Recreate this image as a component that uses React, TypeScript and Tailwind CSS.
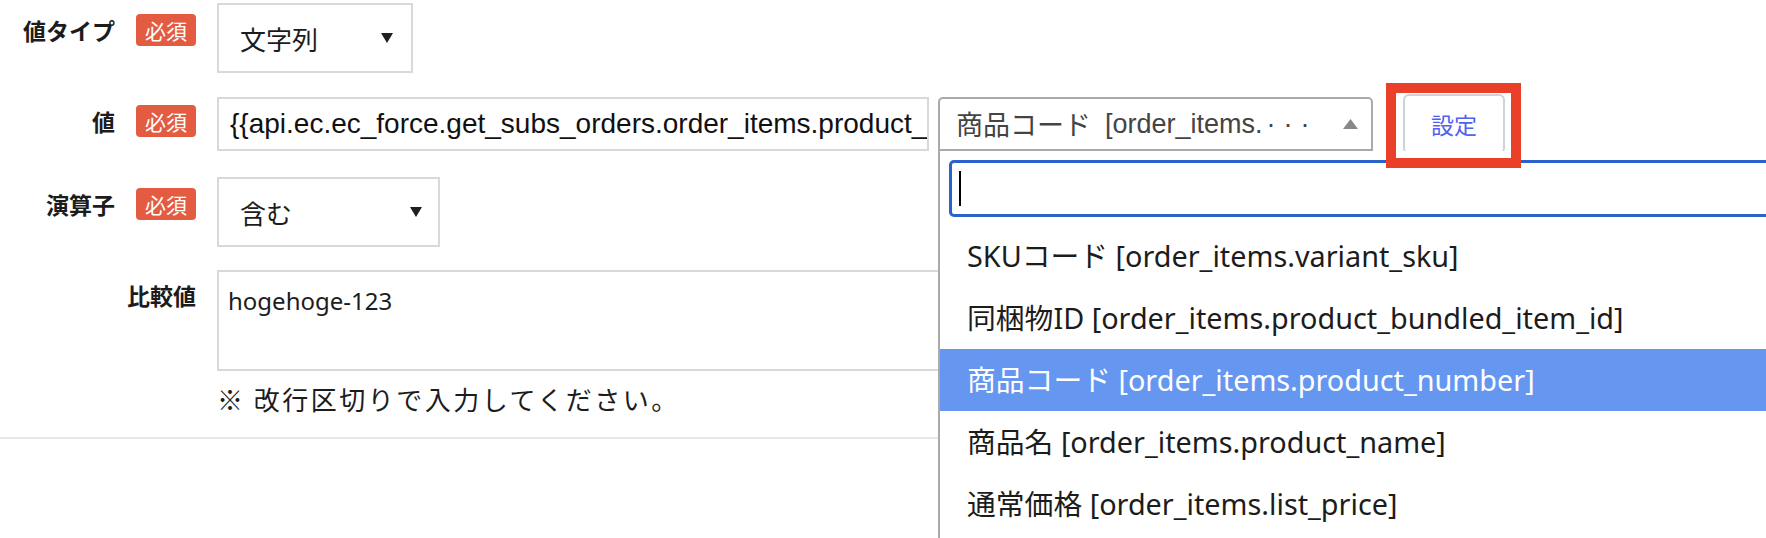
import React from "react";

const jp = "font-['Noto_Sans_CJK_JP',sans-serif]";
const latin = "font-['Liberation_Sans','Noto_Sans_CJK_JP',sans-serif]";

const Badge = () => (
  <span className="flex h-[32px] w-[60px] shrink-0 items-center justify-center rounded-[4px] bg-[#e35c42] text-[21px] leading-none text-white">
    必須
  </span>
);

const Caret = ({ up = false, color = "#1f1f1f" }: { up?: boolean; color?: string }) => (
  <svg width={up ? 15 : 12} height="10" viewBox={up ? "0 0 15 10" : "0 0 12 10"} className="shrink-0">
    <polygon points={up ? "0,10 15,10 7.5,0" : "0,0 12,0 6,10"} fill={color} />
  </svg>
);

const FieldLabel = ({ text, required = true, pt }: { text: string; required?: boolean; pt: string }) => (
  <div className={`flex w-[196px] shrink-0 items-center justify-end gap-[21px] ${pt}`}>
    <span className="text-[23px] font-bold leading-[32px] text-[#1c1c1c]">{text}</span>
    {required && <Badge />}
  </div>
);

const options = [
  "SKUコード [order_items.variant_sku]",
  "同梱物ID [order_items.product_bundled_item_id]",
  "商品コード [order_items.product_number]",
  "商品名 [order_items.product_name]",
  "通常価格 [order_items.list_price]",
];

export default function App() {
  return (
    <div className={`relative h-[538px] w-[1766px] overflow-hidden bg-white ${jp}`}>
      <div className="pt-[3px]">
        {/* 値タイプ */}
        <div className="flex items-start">
          <FieldLabel text="値タイプ" pt="pt-[11px]" />
          <div className="ml-[21px] flex h-[70px] w-[196px] items-center justify-between border-2 border-[#d9d9d9] pl-[21px] pr-[18px] text-[26px] text-[#1c1c1c]">
            <span>文字列</span>
            <Caret />
          </div>
        </div>

        {/* 値 */}
        <div className="mt-[24px] flex items-start">
          <FieldLabel text="値" pt="pt-[8px]" />
          <div className="ml-[21px] h-[54px] w-[712px] overflow-hidden border-2 border-[#d9d9d9]">
            <div className={`flex h-full items-center whitespace-nowrap pl-[11px] text-[28px] text-[#111] ${latin}`}>
              {"{{api.ec.ec_force.get_subs_orders.order_items.product_"}
            </div>
          </div>

          <div className="relative z-10 ml-[9px]">
            <div className="flex h-[54px] w-[435px] items-center justify-between rounded-t-[5px] border-2 border-[#aaaaaa] pl-[16px] pr-[13px] text-[27px] text-[#444]">
              <span className="flex items-center whitespace-nowrap">
                商品コード
                <span className={`ml-[14px] text-[27px] ${latin}`}>[order_items.</span>
                <span className={`ml-[4px] text-[27px] tracking-[8px] ${latin}`}>···</span>
              </span>
              <Caret up color="#888888" />
            </div>
            {/* select2 dropdown */}
            <div className="absolute left-0 top-full h-[420px] w-[900px] border-l-2 border-[#aaaaaa] bg-white pl-[9px] pt-[9px]">
              <div className="flex h-[57px] w-[880px] items-center rounded-[5px] border-[3px] border-[#2a62c9] pl-[7px]">
                <span className="h-[35px] w-[2px] bg-black" />
              </div>
              <ul className="mt-[8px] -ml-[9px] font-['Noto_Sans','Noto_Sans_CJK_JP',sans-serif] text-[28.8px]">
                {options.map((o, i) => (
                  <li
                    key={o}
                    className={`flex h-[62px] items-center whitespace-nowrap pl-[27px] ${
                      i === 2 ? "bg-[#6597f1] text-white" : "text-[#1c1c1c]"
                    }`}
                  >
                    {o}
                  </li>
                ))}
              </ul>
            </div>
          </div>

          <div className="relative ml-[30px] -mt-[3px]">
            <button className="flex h-[60px] w-[102px] items-center justify-center rounded-[6px] border-2 border-[#cfd2d6] bg-white text-[23px] text-[#4f63ee]">
              設定
            </button>
            <div className="pointer-events-none absolute -bottom-[14px] -left-[17px] -right-[16px] -top-[11px] z-20 border-[10px] border-[#ea4029]" />
          </div>
        </div>

        {/* 演算子 */}
        <div className="mt-[23px] flex items-start">
          <FieldLabel text="演算子" pt="pt-[11px]" />
          <div className="ml-[21px] flex h-[70px] w-[223px] items-center justify-between border-2 border-[#d9d9d9] pl-[21px] pr-[16px] text-[26px] text-[#1c1c1c]">
            <span>含む</span>
            <Caret />
          </div>
        </div>

        {/* 比較値 */}
        <div className="mt-[23px] flex items-start">
          <FieldLabel text="比較値" required={false} pt="pt-[9px]" />
          <div className="ml-[21px] h-[101px] w-[1000px] border-2 border-[#d9d9d9] pl-[9px] pt-[14px] font-['Noto_Sans',sans-serif] text-[24px] leading-[30px] text-[#1c1c1c]">
            hogehoge-123
          </div>
        </div>

        <p className="ml-[217px] mt-[10px] text-[26px] leading-[36px] tracking-[2.5px] text-[#1c1c1c]">
          ※ 改行区切りで入力してください。
        </p>

        <div className="mt-[20px] h-[2px] w-full bg-[#e5e7eb]" />
      </div>
    </div>
  );
}
